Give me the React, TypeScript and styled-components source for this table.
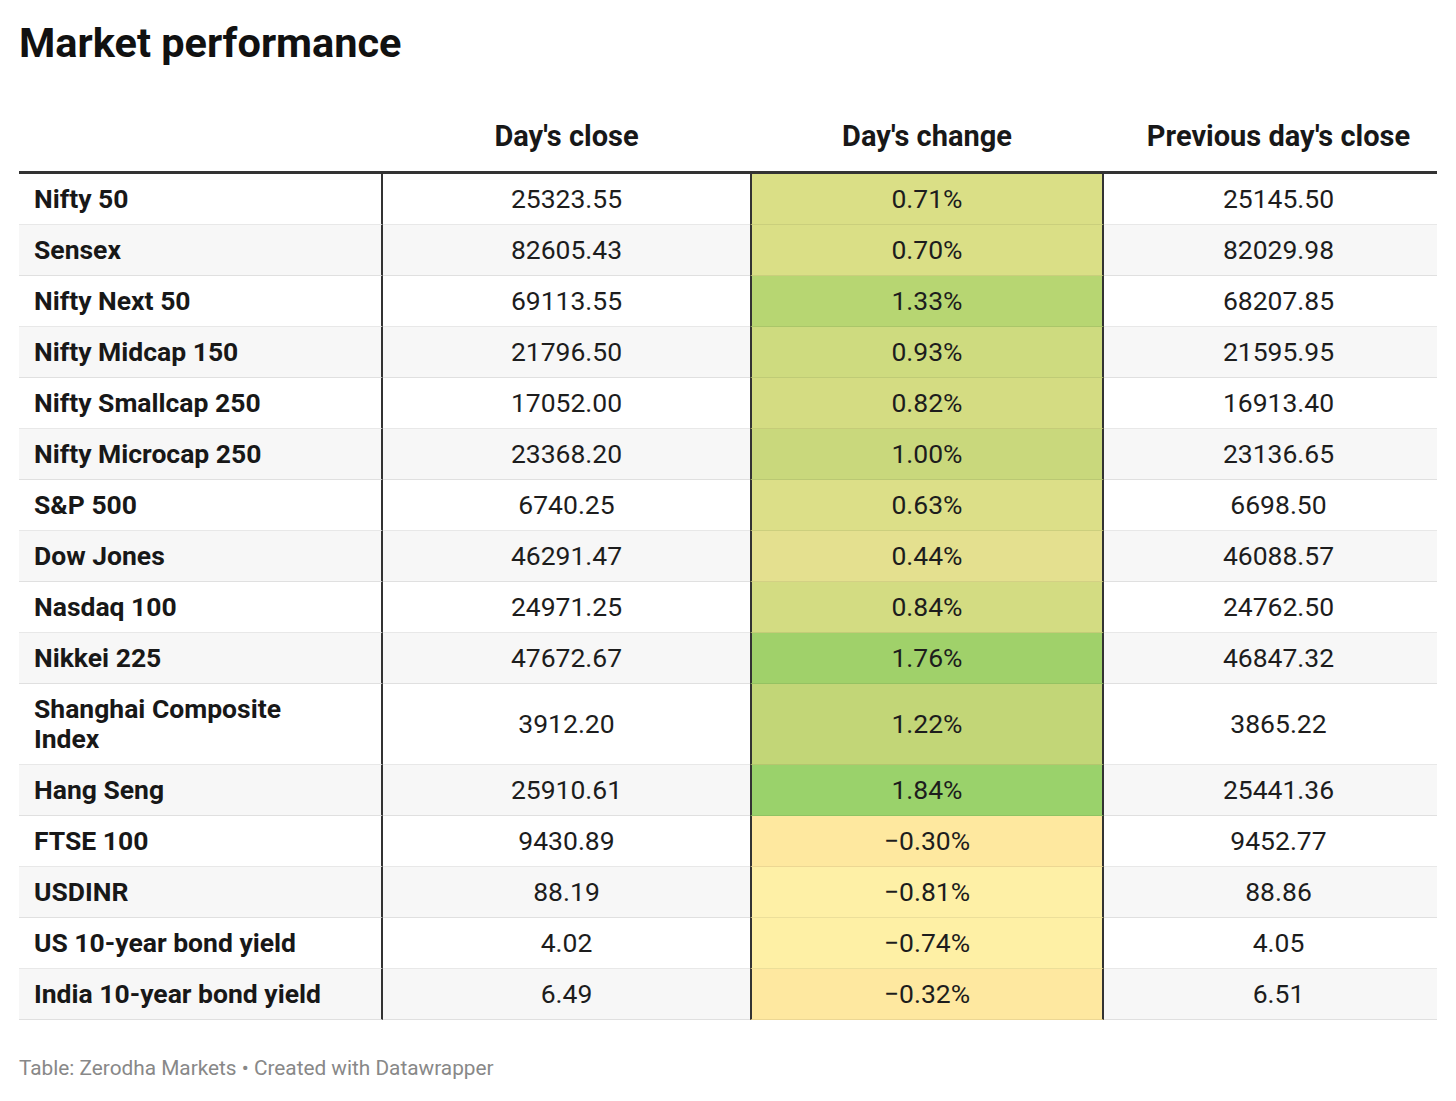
import React from "react";
import styled, {createGlobalStyle} from "styled-components";

const GlobalStyle = createGlobalStyle`
  html, body {
    margin: 0;
    padding: 0;
    background: #fff;
  }
  body {
    font-family: Roboto, "Liberation Sans", Arial, sans-serif;
    color: #181818;
  }
`;

const Page = styled.div`
  width: 1418px;
  padding: 19px 0 0 19px;
`;

const Title = styled.h1`
  margin: 0;
  font-size: 41.5px;
  line-height: 48px;
  font-weight: 700;
  color: #111;
`;

const Table = styled.table`
  margin-top: 35px;
  width: 1418px;
  table-layout: fixed;
  border-collapse: separate;
  border-spacing: 0;
`;

const HeadCell = styled.th<{ $last?: boolean }>`
  box-sizing: border-box;
  padding: 17px ${p => p.$last ? '0' : '8px'} 18px ${p => p.$last ? '16px' : '8px'};
  font-size: 29px;
  line-height: 34px;
  font-weight: 700;
  text-align: center;
  color: #181818;
  border-bottom: 3px solid #333;
`;

const Row = styled.tr<{ $striped: boolean }>`
  background: ${p => p.$striped ? '#f7f7f7' : '#fff'};
`;

const NameCell = styled.td`
  box-sizing: border-box;
  padding: 10px 50px 10px 15px;
  font-size: 26.5px;
  line-height: 30px;
  font-weight: 700;
  color: #181818;
  border-right: 2px solid #333;
  border-bottom: 1px solid rgba(0, 0, 0, 0.09);
`;

const ValueCell = styled.td<{ $last?: boolean }>`
  box-sizing: border-box;
  padding: 10px ${p => p.$last ? '0' : '8px'} 10px ${p => p.$last ? '16px' : '8px'};
  font-size: 26.5px;
  line-height: 30px;
  text-align: center;
  color: #1d1d1d;
  border-bottom: 1px solid rgba(0, 0, 0, 0.09);
`;

const HeatCell = styled(ValueCell)<{ $bg: string }>`
  background: ${p => p.$bg};
  border-left: 2px solid #333;
  border-right: 2px solid #333;
  border-bottom: 1px solid rgba(0, 0, 0, 0.07);
`;

const Footer = styled.div`
  margin-top: 36px;
  font-size: 20.8px;
  line-height: 24px;
  color: #888;
`;

type Item = { name: string; close: string; change: string; prev: string; color: string };

const rows: Item[] = [
    {name: "Nifty 50", close: "25323.55", change: "0.71%", prev: "25145.50", color: "#dadf86"},
    {name: "Sensex", close: "82605.43", change: "0.70%", prev: "82029.98", color: "#dadf86"},
    {name: "Nifty Next 50", close: "69113.55", change: "1.33%", prev: "68207.85", color: "#b7d672"},
    {name: "Nifty Midcap 150", close: "21796.50", change: "0.93%", prev: "21595.95", color: "#cedb7f"},
    {name: "Nifty Smallcap 250", close: "17052.00", change: "0.82%", prev: "16913.40", color: "#d4dc82"},
    {name: "Nifty Microcap 250", close: "23368.20", change: "1.00%", prev: "23136.65", color: "#c9d87c"},
    {name: "S&P 500", close: "6740.25", change: "0.63%", prev: "6698.50", color: "#dcdf88"},
    {name: "Dow Jones", close: "46291.47", change: "0.44%", prev: "46088.57", color: "#e4e08f"},
    {name: "Nasdaq 100", close: "24971.25", change: "0.84%", prev: "24762.50", color: "#d3dc82"},
    {name: "Nikkei 225", close: "47672.67", change: "1.76%", prev: "46847.32", color: "#a0d16a"},
    {name: "Shanghai Composite Index", close: "3912.20", change: "1.22%", prev: "3865.22", color: "#c2d677"},
    {name: "Hang Seng", close: "25910.61", change: "1.84%", prev: "25441.36", color: "#9ad26b"},
    {name: "FTSE 100", close: "9430.89", change: "\u22120.30%", prev: "9452.77", color: "#fee89f"},
    {name: "USDINR", close: "88.19", change: "\u22120.81%", prev: "88.86", color: "#fef0a6"},
    {name: "US 10-year bond yield", close: "4.02", change: "\u22120.74%", prev: "4.05", color: "#fef0a5"},
    {name: "India 10-year bond yield", close: "6.49", change: "\u22120.32%", prev: "6.51", color: "#fee8a0"},
];

const App: React.FC = () => (
    <Page>
        <GlobalStyle/>
        <Title>Market performance</Title>
        <Table>
            <colgroup>
                <col style={{width: 364}}/>
                <col style={{width: 367}}/>
                <col style={{width: 354}}/>
                <col style={{width: 333}}/>
            </colgroup>
            <thead>
            <tr>
                <HeadCell/>
                <HeadCell>Day's close</HeadCell>
                <HeadCell>Day's change</HeadCell>
                <HeadCell $last>Previous day's close</HeadCell>
            </tr>
            </thead>
            <tbody>
            {rows.map((r, i) => (
                <Row key={r.name} $striped={i % 2 === 1}>
                    <NameCell>{r.name}</NameCell>
                    <ValueCell>{r.close}</ValueCell>
                    <HeatCell $bg={r.color}>{r.change}</HeatCell>
                    <ValueCell $last>{r.prev}</ValueCell>
                </Row>
            ))}
            </tbody>
        </Table>
        <Footer>Table: Zerodha Markets • Created with Datawrapper</Footer>
    </Page>
);

export default App;
